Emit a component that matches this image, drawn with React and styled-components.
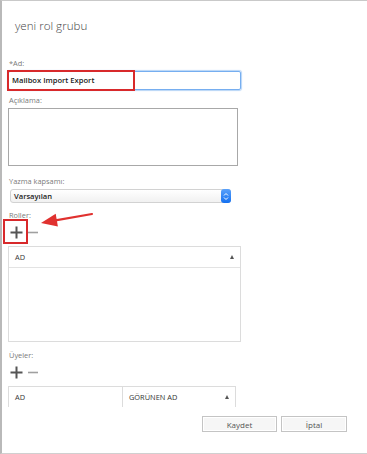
import React from 'react';
import styled, { createGlobalStyle } from 'styled-components';

const GlobalStyle = createGlobalStyle`
  html, body {
    margin: 0;
    padding: 0;
    background: #ffffff;
  }
  body {
    font-family: 'Open Sans', 'Noto Sans', sans-serif;
  }
`;

const Window = styled.div`
  position: relative;
  width: 367px;
  height: 454px;
  box-sizing: border-box;
  border-top: 1px solid #c9c9c9;
  border-left: 2px solid #b9b9b9;
  border-bottom: 1px solid #d0d0d0;
  overflow: hidden;
  background: #fff;
  display: flex;
  flex-direction: column;

  &::before {
    content: '';
    position: absolute;
    left: -2px;
    top: -1px;
    width: 2px;
    height: 15px;
    background: #444;
  }
`;

const Title = styled.h1`
  margin: 16px 0 0 13px;
  font-size: 11.6px;
  font-weight: 300;
  color: #444;
  line-height: 18px;
`;

const Form = styled.div`
  display: flex;
  flex-direction: column;
  padding: 0 0 0 6px;
  margin-top: 23px;
`;

const Label = styled.div`
  font-size: 7.4px;
  color: #7a7a7a;
  line-height: 10px;
  margin: ${(p) => p.$mt || 0}px 0 0 1px;
`;

const InputWrap = styled.div`
  position: relative;
  width: 233px;
  margin-top: 3px;
`;

const TextInput = styled.div`
  box-sizing: border-box;
  height: 19px;
  border: 1px solid #76aef0;
  border-radius: 2px;
  box-shadow: 0 0 1px 1px #b7d5f7;
  padding-left: 3px;
  font-size: 7.6px;
  font-weight: 600;
  color: #1a1a1a;
  line-height: 17px;
`;

const Highlight = styled.div`
  position: absolute;
  left: ${(p) => p.$left}px;
  top: ${(p) => p.$top}px;
  width: ${(p) => p.$w}px;
  height: ${(p) => p.$h}px;
  border: 2px solid #d8292b;
  box-sizing: border-box;
  pointer-events: none;
`;

const TextArea = styled.div`
  box-sizing: border-box;
  width: 230px;
  height: 58px;
  margin: 3px 0 0 0;
  border: 1px solid #a8a8a8;
`;

const SelectBox = styled.div`
  box-sizing: border-box;
  width: 221px;
  height: 14px;
  margin: 3px 0 0 2px;
  border: 1px solid #d2d2d2;
  border-radius: 3px;
  background: linear-gradient(#ffffff, #f1f1f1);
  display: flex;
  align-items: center;
  justify-content: space-between;
  padding-left: 3px;
  font-size: 7.6px;
  font-weight: 600;
  color: #222;
`;

const Stepper = styled.div`
  width: 10px;
  height: 14px;
  margin-right: -1px;
  border-radius: 3px;
  background: linear-gradient(#5aa2fb, #1470f0);
  display: flex;
  align-items: center;
  justify-content: center;
`;

const IconRow = styled.div`
  position: relative;
  display: flex;
  align-items: center;
  gap: 5px;
  height: 24px;
  margin: ${(p) => p.$mt || 0}px 0 0 2px;
`;

const Table = styled.div`
  box-sizing: border-box;
  width: ${(p) => p.$w}px;
  height: ${(p) => p.$h}px;
  margin: ${(p) => p.$mt || 0}px 0 0 0;
  border: 1px solid #dcdcdc;
  border-bottom: ${(p) => (p.$open ? 'none' : '1px solid #dcdcdc')};
`;

const HeaderRow = styled.div`
  display: flex;
  height: 20px;
  border-bottom: ${(p) => (p.$open ? 'none' : '1px solid #e3e3e3')};
`;

const HeaderCell = styled.div`
  box-sizing: border-box;
  flex: ${(p) => (p.$w ? `0 0 ${p.$w}px` : '1')};
  display: flex;
  align-items: center;
  justify-content: space-between;
  padding: 0 6px 0 6px;
  font-size: 7.4px;
  color: #333;
  border-right: ${(p) => (p.$divider ? '1px solid #dcdcdc' : 'none')};
`;

const SortArrow = styled.span`
  width: 0;
  height: 0;
  border-left: 2.5px solid transparent;
  border-right: 2.5px solid transparent;
  border-bottom: 4px solid #555;
`;

const Footer = styled.div`
  display: flex;
  justify-content: flex-end;
  gap: 4px;
  padding-right: 20px;
  margin-top: 9px;
`;

const Button = styled.button`
  box-sizing: border-box;
  width: ${(p) => p.$w}px;
  height: 16px;
  border: 1px solid #c4c4c4;
  background: #f6f6f6;
  box-shadow: inset 0 0 0 1px #fff;
  font-family: 'Open Sans', 'Noto Sans', sans-serif;
  font-size: 8px;
  color: #555;
  padding: 0;
`;

const Arrow = styled.svg`
  position: absolute;
  left: 34px;
  top: 206px;
`;

const Plus = ({ color = '#555' }) => (
  <svg width="13" height="13" viewBox="0 0 13 13">
    <path d="M6.5 0.5v12M0.5 6.5h12" stroke={color} strokeWidth="2" />
  </svg>
);

const Minus = ({ color = '#a0a0a0' }) => (
  <svg width="10" height="13" viewBox="0 0 10 13">
    <path d="M0 6.5h10" stroke={color} strokeWidth="1.6" />
  </svg>
);

const App = () => (
  <>
    <GlobalStyle />
    <Window>
      <Title>yeni rol grubu</Title>
      <Form>
        <Label>*Ad:</Label>
        <InputWrap>
          <TextInput>Mailbox Import Export</TextInput>
          <Highlight $left={-1} $top={-1} $w={128} $h={21} />
        </InputWrap>
        <Label $mt={5}>Açıklama:</Label>
        <TextArea />
        <Label $mt={10}>Yazma kapsamı:</Label>
        <SelectBox>
          Varsayılan
          <Stepper>
            <svg width="6" height="9" viewBox="0 0 6 9">
              <path d="M1 3.5L3 1.5L5 3.5M1 5.5L3 7.5L5 5.5" stroke="#fff" strokeWidth="1" fill="none" />
            </svg>
          </Stepper>
        </SelectBox>
        <Label $mt={7}>Roller:</Label>
        <IconRow $mt={0}>
          <Plus />
          <Minus />
          <Highlight $left={-7} $top={-1} $w={25} $h={25} />
        </IconRow>
        <Table $w={233} $h={96} $mt={2}>
          <HeaderRow>
            <HeaderCell>
              AD
              <SortArrow />
            </HeaderCell>
          </HeaderRow>
        </Table>
        <Label $mt={8}>Üyeler:</Label>
        <IconRow $mt={0}>
          <Plus />
          <Minus />
        </IconRow>
        <Table $w={228} $h={21} $mt={2} $open>
          <HeaderRow $open>
            <HeaderCell $w={114} $divider>
              AD
            </HeaderCell>
            <HeaderCell>
              GÖRÜNEN AD
              <SortArrow />
            </HeaderCell>
          </HeaderRow>
        </Table>
      </Form>
      <Footer>
        <Button $w={75}>Kaydet</Button>
        <Button $w={66}>İptal</Button>
      </Footer>
      <Arrow width="60" height="24" viewBox="0 0 60 24">
        <path d="M56 7L18 13.7" stroke="#e0312f" strokeWidth="2.2" strokeLinecap="round" />
        <path d="M5 16L19.7 6.8L21.9 19.6Z" fill="#e0312f" />
      </Arrow>
    </Window>
  </>
);

export default App;
